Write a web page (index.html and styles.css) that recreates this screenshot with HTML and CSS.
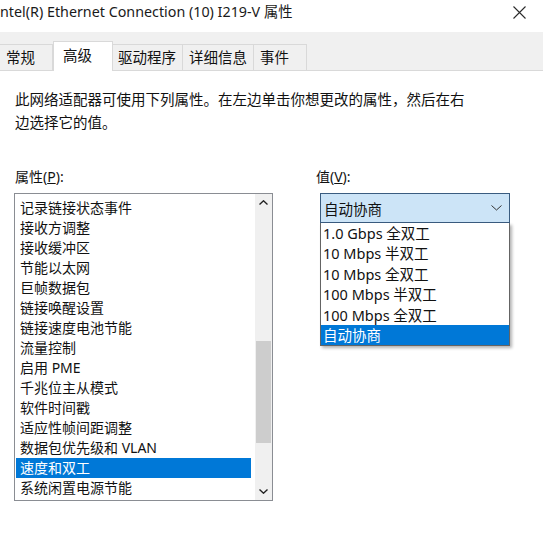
FILE: index.html
```html
<!DOCTYPE html>
<html lang="zh-CN">
<head>
    <meta charset="UTF-8">
    <meta name="viewport" content="width=device-width, initial-scale=1.0">
    <title>Intel(R) Ethernet Connection (10) I219-V 属性</title>
    <link rel="stylesheet" href="styles.css">
</head>
<body>
    <div class="window">
        <div class="titlebar">
            <span class="title">ntel(R) Ethernet Connection (10) I219-V 属性</span>
            <span class="close">
                <svg width="13" height="13" viewBox="0 0 13 13"><path d="M0.5 0.5 L12.5 12.5 M12.5 0.5 L0.5 12.5" stroke="#2b2b2b" stroke-width="1.1" fill="none"/></svg>
            </span>
        </div>

        <div class="tabs">
            <div class="tab">常规</div>
            <div class="tab active">高级</div>
            <div class="tab">驱动程序</div>
            <div class="tab">详细信息</div>
            <div class="tab">事件</div>
        </div>

        <div class="panel">
            <p class="intro">此网络适配器可使用下列属性。在左边单击你想更改的属性，然后在右<br>边选择它的值。</p>

            <div class="fields">
                <div class="props">
                    <div class="label">属性(<u>P</u>):</div>
                    <div class="listbox">
                        <ul class="items">
                            <li>记录链接状态事件</li>
                            <li>接收方调整</li>
                            <li>接收缓冲区</li>
                            <li>节能以太网</li>
                            <li>巨帧数据包</li>
                            <li>链接唤醒设置</li>
                            <li>链接速度电池节能</li>
                            <li>流量控制</li>
                            <li>启用 PME</li>
                            <li>千兆位主从模式</li>
                            <li>软件时间戳</li>
                            <li>适应性帧间距调整</li>
                            <li>数据包优先级和 VLAN</li>
                            <li class="selected">速度和双工</li>
                            <li>系统闲置电源节能</li>
                        </ul>
                        <div class="scrollbar">
                            <div class="sb-btn">
                                <svg width="9" height="5" viewBox="0 0 9 5"><path d="M0.5 4.5 L4.5 0.8 L8.5 4.5" stroke="#222" stroke-width="1.4" fill="none"/></svg>
                            </div>
                            <div class="track"><div class="thumb"></div></div>
                            <div class="sb-btn">
                                <svg width="9" height="5" viewBox="0 0 9 5"><path d="M0.5 0.5 L4.5 4.2 L8.5 0.5" stroke="#222" stroke-width="1.4" fill="none"/></svg>
                            </div>
                        </div>
                    </div>
                </div>

                <div class="value">
                    <div class="label">值(<u>V</u>):</div>
                    <div class="combo">
                        <span>自动协商</span>
                        <svg width="11" height="6" viewBox="0 0 11 6"><path d="M0.5 0.5 L5.5 5 L10.5 0.5" stroke="#333" stroke-width="1" fill="none"/></svg>
                    </div>
                    <ul class="dropdown">
                        <li>1.0 Gbps 全双工</li>
                        <li>10 Mbps 半双工</li>
                        <li>10 Mbps 全双工</li>
                        <li>100 Mbps 半双工</li>
                        <li>100 Mbps 全双工</li>
                        <li class="selected">自动协商</li>
                    </ul>
                </div>
            </div>
        </div>
    </div>
</body>
</html>
```

FILE: styles.css
```css
body {
    margin: 0;
    background-color: #fff;
    font-family: "Noto Sans", "Noto Sans CJK SC", sans-serif;
    color: #111;
}
.window {
    width: 543px;
    height: 542px;
    overflow: hidden;
}
.titlebar {
    height: 32px;
    display: flex;
    justify-content: space-between;
    align-items: flex-start;
}
.title {
    font-size: 14.3px;
    line-height: 24px;
    white-space: nowrap;
    color: #1a1a1a;
}
.close {
    width: 24px;
    height: 24px;
    margin-right: 12px;
    display: flex;
    align-items: center;
    justify-content: center;
}
.tabs {
    display: flex;
    align-items: flex-end;
    height: 38px;
    background-color: #f0f0f0;
    border-bottom: 1px solid #d9d9d9;
}
.tab {
    height: 25px;
    line-height: 25px;
    min-width: 40px;
    padding: 0 6px;
    font-size: 14.5px;
    border: 1px solid #d9d9d9;
    border-bottom: none;
    margin-right: -1px;
    background-color: #f0f0f0;
    white-space: nowrap;
}
.tab:first-child {
    margin-left: -1px;
}
.tab.active {
    height: 29px;
    line-height: 26px;
    padding: 0 9px;
    margin: 0 -2px -1px 1px;
    background-color: #fff;
    position: relative;
}
.panel {
    padding: 17px 0 0 14px;
}
.intro {
    margin: 0 0 0 1px;
    font-size: 14.5px;
    line-height: 23px;
    white-space: nowrap;
}
.fields {
    display: flex;
    margin-top: 33px;
}
.label {
    font-size: 14px;
    line-height: 20px;
    margin-bottom: 6px;
}
.props .label {
    margin-left: 1px;
}
.listbox {
    display: flex;
    width: 257px;
    height: 306px;
    border: 1px solid #8a8d93;
    background-color: #fff;
}
.items {
    list-style: none;
    margin: 0;
    padding: 4px 4px 0 1px;
    flex: 1;
}
.items li, .dropdown li {
    height: 20px;
    line-height: 20px;
    font-size: 14px;
    white-space: nowrap;
}
.items li {
    padding-left: 4px;
}
.selected {
    background-color: #0078d7;
    color: #fff;
}
.scrollbar {
    width: 17px;
    display: flex;
    flex-direction: column;
    background-color: #f0f0f0;
}
.sb-btn {
    height: 17px;
    display: flex;
    align-items: center;
    justify-content: center;
}
.track {
    flex: 1;
    padding-top: 130px;
}
.thumb {
    height: 102px;
    margin: 0 1px;
    background-color: #cdcdcd;
}
.value {
    margin-left: 43px;
}
.combo {
    box-sizing: border-box;
    width: 190px;
    height: 30px;
    margin-left: 4px;
    padding: 0 7px 0 3px;
    display: flex;
    align-items: center;
    justify-content: space-between;
    background-color: #cce4f7;
    border: 1px solid #3a5c80;
    font-size: 14.5px;
}
.dropdown {
    box-sizing: border-box;
    width: 190px;
    margin: 0 0 0 4px;
    padding: 0;
    list-style: none;
    border: 1px solid #646464;
    border-top: none;
    background-color: #fff;
    box-shadow: 2px 2px 3px rgba(0, 0, 0, 0.3);
}
.dropdown li {
    height: 20.4px;
    line-height: 20.4px;
    padding-left: 2px;
    font-size: 14.5px;
}
```
